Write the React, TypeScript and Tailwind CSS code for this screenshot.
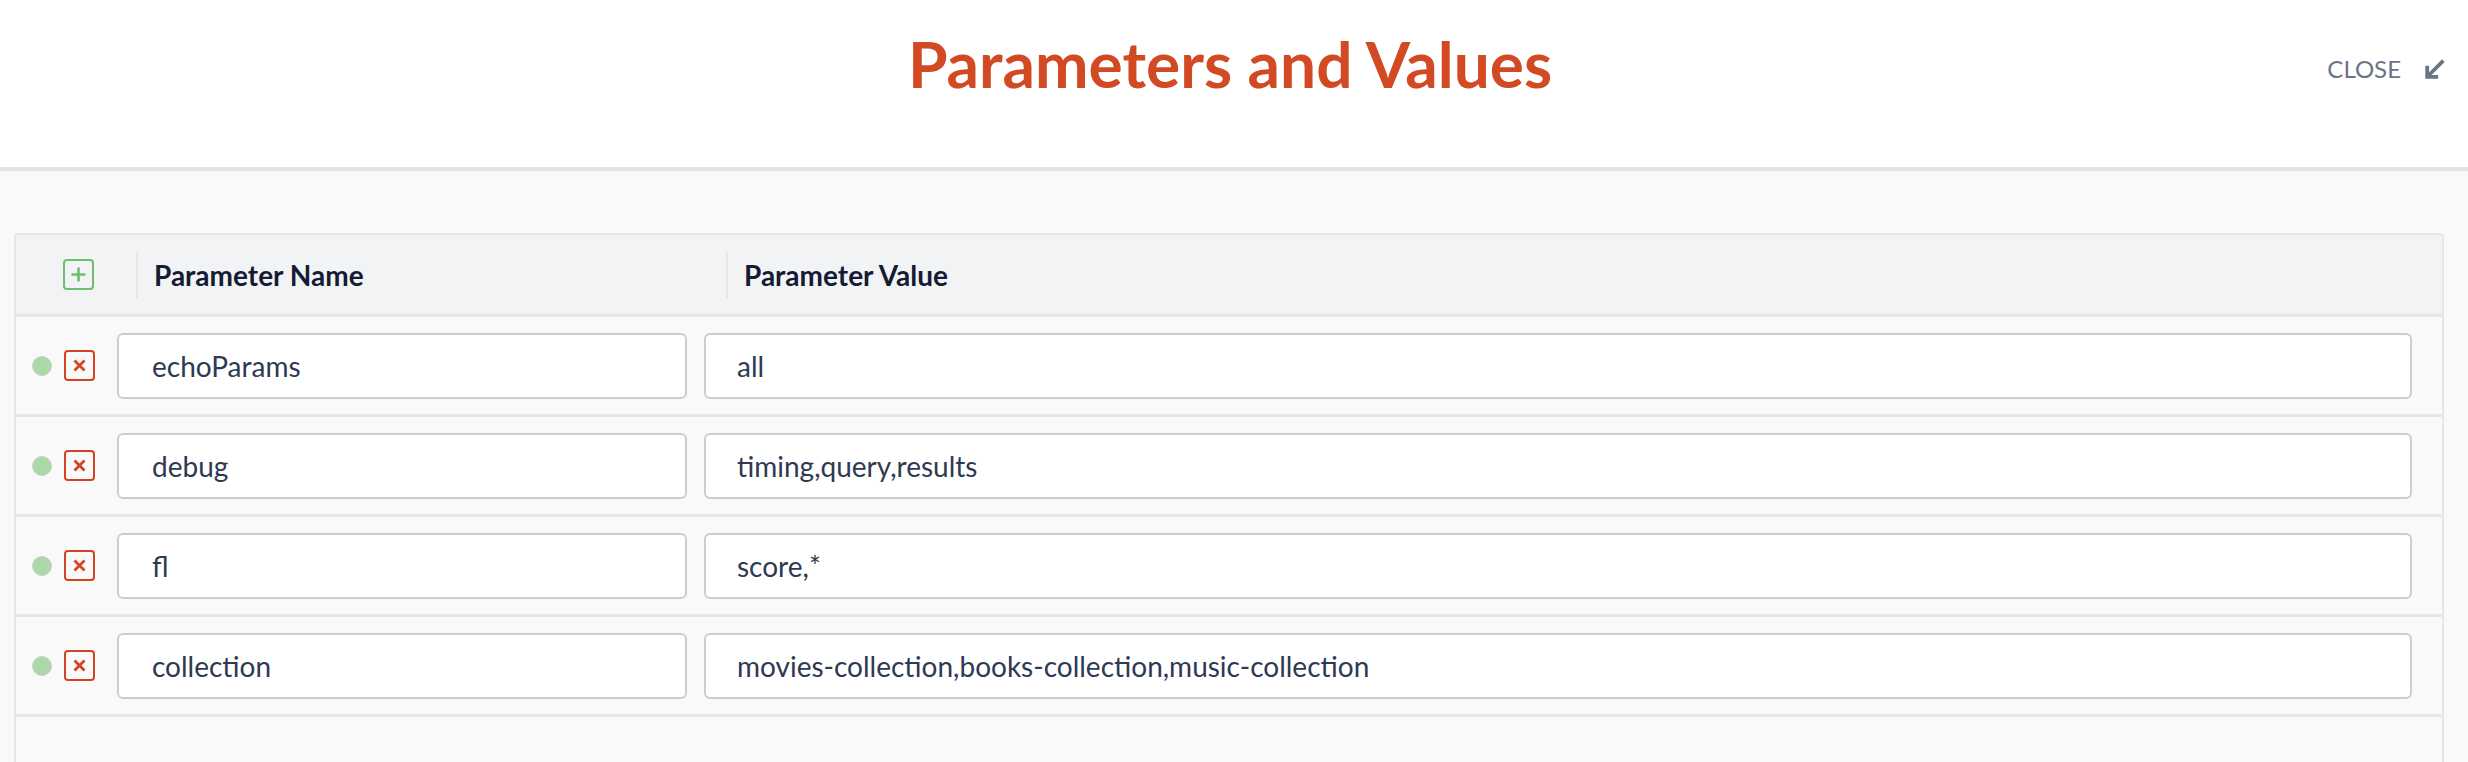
import React from "react";

const rows = [
  { name: "echoParams", value: "all" },
  { name: "debug", value: "timing,query,results" },
  { name: "fl", value: "score,*" },
  { name: "collection", value: "movies-collection,books-collection,music-collection" },
];

function DownLeftArrow() {
  return (
    <svg width="23" height="23" viewBox="0 0 22 22" fill="none" stroke="#6b7388" strokeWidth="3.6" strokeLinecap="butt">
      <path d="M19.5 2.5 L5 17" />
      <path d="M4 7.5 V18 H14.5" strokeLinejoin="miter" />
    </svg>
  );
}

export default function App() {
  return (
    <div className="w-[2468px] h-[762px] overflow-hidden bg-[#f9f9f9]" style={{ fontFamily: "Lato, 'Noto Sans', sans-serif" }}>
      <header className="relative h-[171px] bg-white border-b-[4px] border-[#e3e3e3] flex items-start justify-center">
        <h1 className="mt-[21px] mr-[8px] text-[64px] leading-[86px] font-bold text-[#d24a24]">Parameters and Values</h1>
        <button className="absolute right-[22px] top-[54px] flex items-center gap-[22px] text-[24px] text-[#6b7388]">
          <span className="leading-[30px]">CLOSE</span>
          <DownLeftArrow />
        </button>
      </header>
      <div className="pt-[62px] px-[14px]">
        <div className="w-[2430px] h-[600px] border-2 border-[#e6e6e6] rounded-[4px] bg-[#f9f9f9] overflow-hidden">
          <div className="h-[82px] bg-[#f2f3f5] border-b-[3px] border-[#e6e6e6] flex items-center">
            <div className="w-[120px] flex items-center pl-[47px] h-full">
              <button className="w-[31px] h-[31px] rounded-[4px] border-2 border-[#6cbf6c] flex items-center justify-center">
                <svg width="17" height="17" viewBox="0 0 17 17" stroke="#6cbf6c" strokeWidth="2.6">
                  <path d="M8.5 1.5 V15.5 M1.5 8.5 H15.5" />
                </svg>
              </button>
            </div>
            <div className="w-[590px] h-[46px] border-l-2 border-[#e6e6e6] flex items-center pl-[16px]">
              <span className="text-[28px] font-bold text-[#141b33]">Parameter Name</span>
            </div>
            <div className="flex-1 h-[46px] border-l-2 border-[#e6e6e6] flex items-center pl-[16px]">
              <span className="text-[28px] font-bold text-[#141b33]">Parameter Value</span>
            </div>
          </div>
          {rows.map((r) => (
            <div key={r.name} className="h-[100px] border-b-[3px] border-[#e6e6e6] flex items-center">
              <div className="w-[101px] flex items-center pl-[16px] gap-[12px]">
                <span className="w-[20px] h-[20px] rounded-full bg-[#a9d9a6] border-[1.5px] border-[#cfcfcf]" />
                <button className="w-[31px] h-[31px] rounded-[4px] border-2 border-[#d4431f] flex items-center justify-center">
                  <svg width="13" height="13" viewBox="0 0 13 13" stroke="#d4431f" strokeWidth="2.8">
                    <path d="M1.5 1.5 L11.5 11.5 M11.5 1.5 L1.5 11.5" />
                  </svg>
                </button>
              </div>
              <div className="w-[570px] h-[66px] bg-white border-2 border-[#cdcdcd] rounded-[6px] flex items-center pl-[33px] text-[28px] text-[#2e3a52]">
                {r.name}
              </div>
              <div className="ml-[17px] w-[1708px] h-[66px] bg-white border-2 border-[#cdcdcd] rounded-[6px] flex items-center pl-[31px] text-[28px] text-[#2e3a52]">
                {r.value}
              </div>
            </div>
          ))}
        </div>
      </div>
    </div>
  );
}
